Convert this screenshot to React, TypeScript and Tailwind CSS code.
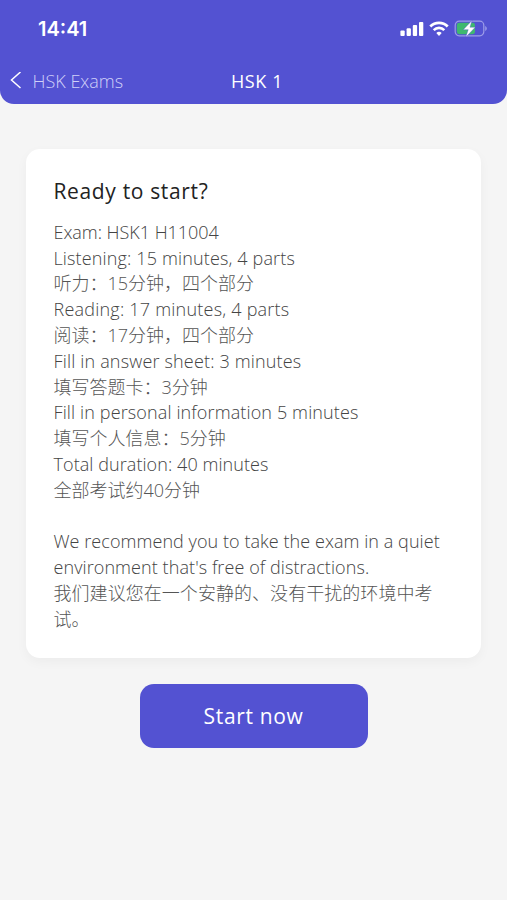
import React from "react";
import cn from "clsx";

type Line = {
  text: string;
  className?: string;
};

/** Exam summary, one entry per printed line. */
const DETAILS: Line[] = [
  { text: "Exam: HSK1 H11004", className: "tracking-[-0.03px]" },
  { text: "Listening: 15 minutes, 4 parts", className: "tracking-[0.145px]" },
  { text: "听力：15分钟，四个部分", className: "text-[#555]" },
  { text: "Reading: 17 minutes, 4 parts", className: "tracking-[0.22px]" },
  { text: "阅读：17分钟，四个部分", className: "text-[#555]" },
  { text: "Fill in answer sheet: 3 minutes", className: "tracking-[0.17px]" },
  { text: "填写答题卡：3分钟", className: "text-[#555]" },
  {
    text: "Fill in personal information 5 minutes",
    className: "tracking-[0.125px]",
  },
  { text: "填写个人信息：5分钟", className: "text-[#555]" },
  { text: "Total duration: 40 minutes", className: "tracking-[0.07px]" },
  { text: "全部考试约40分钟", className: "text-[#555]" },
];

const ADVICE: Line[] = [
  {
    text: "We recommend you to take the exam in a quiet",
    className: "tracking-[0.06px]",
  },
  {
    text: "environment that's free of distractions.",
    className: "tracking-[0.08px]",
  },
  {
    text: "我们建议您在一个安静的、没有干扰的环境中考",
    className: "tracking-[0.05px] text-[#555]",
  },
  { text: "试。", className: "text-[#555]" },
];

const SignalIcon = () => (
  <svg width="24" height="16" viewBox="0 0 24 16" fill="#fff">
    <rect x="0.4" y="9.5" width="4.3" height="5.6" rx="1" />
    <rect x="6.6" y="7.3" width="4.3" height="7.8" rx="1" />
    <rect x="12.8" y="4" width="4.3" height="11.1" rx="1" />
    <rect x="19" y="1" width="4.3" height="14.1" rx="1" />
  </svg>
);

const WifiIcon = () => (
  <svg width="20" height="16" viewBox="0 0 20 16" fill="none" stroke="#fff">
    <path d="M1.3 5.4a12.3 12.3 0 0 1 17.4 0" strokeWidth="2.8" />
    <path d="M4.7 9.1a7.500 7.500 0 0 1 10.600 0" strokeWidth="2.6" />
    <path
      d="M10 14.900 7.300 12.100a3.900 3.900 0 0 1 5.400 0Z"
      fill="#fff"
      stroke="none"
    />
  </svg>
);

const BatteryIcon = () => (
  <svg width="33" height="18" viewBox="0 0 33 18">
    <rect
      x="1.2"
      y="1.2"
      width="28.6"
      height="14.6"
      rx="4"
      fill="none"
      stroke="#9d9de8"
      strokeWidth="1.2"
    />
    <rect x="2.8" y="2.8" width="18.2" height="11.4" rx="2.4" fill="#3fb96f" />
    <path d="M31.2 6v5c1-.4 1.6-1.4 1.6-2.500s-.6-2.100-1.600-2.500Z" fill="#9d9de8" />
    <path
      d="M18 .4 9.200 9.700h5l-2.500 7.600 9.600-10.100h-5.300Z"
      fill="#fff"
      stroke="#5352d2"
      strokeWidth="0.4"
    />
  </svg>
);

const Lines: React.FC<{ items: Line[] }> = ({ items }) => (
  <div>
    {items.map(({ text, className }) => (
      <p key={text} className={cn("whitespace-nowrap", className)}>
        {text}
      </p>
    ))}
  </div>
);

export default function App() {
  return (
    <div className="flex h-[900px] w-[507px] flex-col bg-[#f5f5f5] font-['Open_Sans','Noto_Sans_CJK_SC',sans-serif]">
      <header className="h-[104px] rounded-b-[14px] bg-[#5352d2] text-white">
        <div className="flex h-[57px] items-center justify-between pr-[20px] pl-[38px]">
          <span className="font-['Inter',sans-serif] text-[20px] font-semibold">
            14:41
          </span>
          <div className="flex items-center gap-[5px]">
            <SignalIcon />
            <WifiIcon />
            <BatteryIcon />
          </div>
        </div>
        <div className="grid h-[48px] grid-cols-3 items-center">
          <button
            type="button"
            className="flex items-center gap-[10.5px] pl-[10px] text-[18px] font-light text-[#d0d0f8]"
          >
            <svg width="12" height="18" viewBox="0 0 12 18" fill="none">
              <path d="M10.500 0 1.500 8l9 8" stroke="#fff" strokeWidth="1.500" />
            </svg>
            <span className="whitespace-nowrap">HSK Exams</span>
          </button>
          <h1 className="pl-[7px] text-center text-[18px] font-medium tracking-[0.6px]">
            HSK 1
          </h1>
        </div>
      </header>

      <main className="flex flex-col items-center px-[26px] pt-[45px]">
        <section className="h-[509px] w-full rounded-[14px] bg-white px-[27.5px] pt-[26px] shadow-[0_4px_12px_rgba(0,0,0,0.04)]">
          <h2 className="text-[21px] leading-[32px] font-medium tracking-[0.65px] text-[#222]">
            Ready to start?
          </h2>
          <div className="mt-[12.9px] flex flex-col gap-[25.8px] text-[18px] leading-[25.8px] font-light text-[#444]">
            <Lines items={DETAILS} />
            <Lines items={ADVICE} />
          </div>
        </section>

        <button
          type="button"
          className="mt-[26px] h-[64px] w-[228px] rounded-[14px] bg-[#5352d2] pt-px text-[21px] tracking-[0.65px] text-white"
        >
          Start now
        </button>
      </main>
    </div>
  );
}
